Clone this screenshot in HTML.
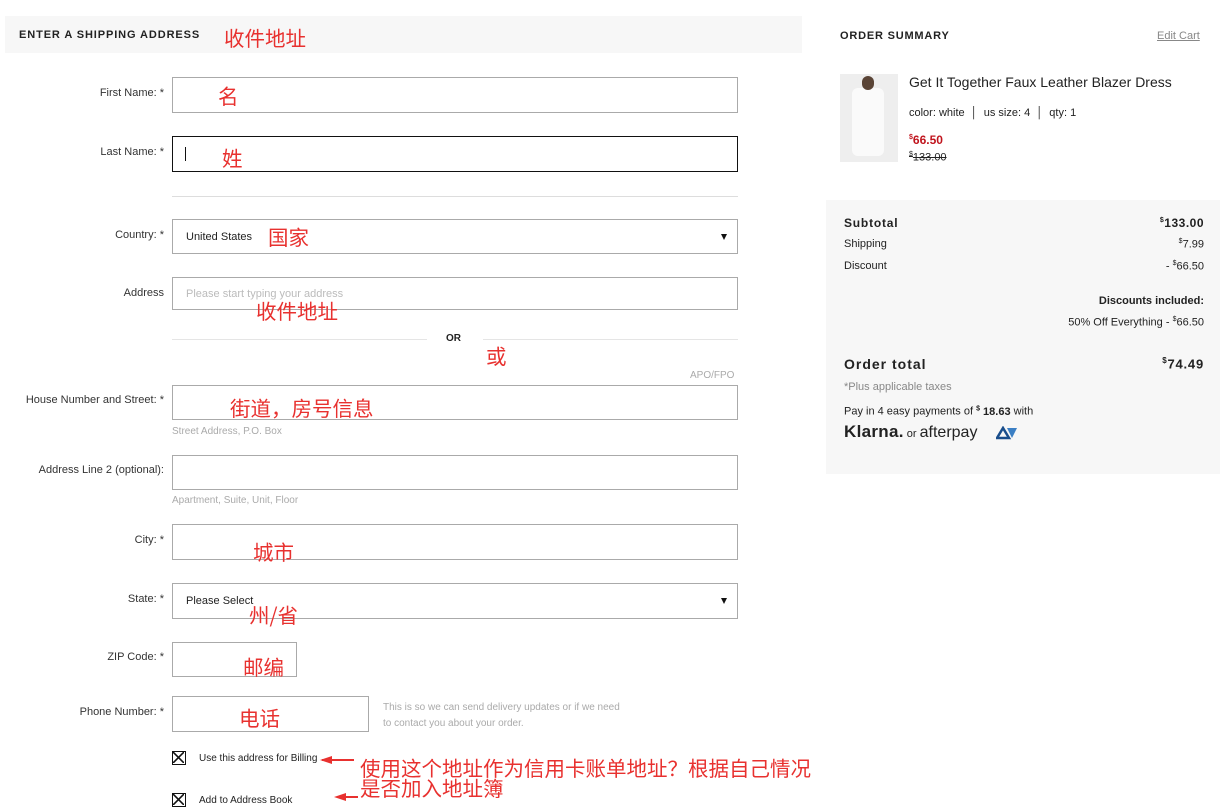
<!DOCTYPE html>
<html><head><meta charset="utf-8">
<style>
*{margin:0;padding:0;box-sizing:border-box}
body{width:1220px;height:806px;background:#fff;position:relative;overflow:hidden;font-family:"Liberation Sans","Noto Sans CJK SC",sans-serif;color:#222}
.a{position:absolute}
.lbl{position:absolute;right:1056px;font-size:11px;color:#333;white-space:nowrap}
.in{position:absolute;left:172px;width:566px;height:36px;border:1px solid #aaa;background:#fff}
.cn{position:absolute;color:#e8312f;font-size:20.5px;font-family:"Noto Sans CJK SC",sans-serif;white-space:nowrap;line-height:1}
.hint{position:absolute;left:172px;font-size:10px;color:#aaa}
.sel{font-size:11px;color:#222;padding:11px 13px;}
.sel:after{content:"";position:absolute;right:10px;top:14px;border-left:3.5px solid transparent;border-right:3.5px solid transparent;border-top:6px solid #111}
.chk{position:absolute;left:172px;width:14px;height:14px;border:1.5px solid #111}
.chk svg{position:absolute;left:0;top:0}
.r{position:absolute;right:16px;font-size:12px}
</style></head><body>
<div class="a" style="left:5px;top:16px;width:797px;height:37px;background:#f7f7f7"></div>
<div class="a" style="left:19px;top:29px;font-size:11px;font-weight:bold;letter-spacing:.9px">ENTER A SHIPPING ADDRESS</div>
<div class="cn" style="left:224px;top:27px">收件地址</div>

<div class="lbl" style="top:87px">First Name: *</div>
<div class="in" style="top:77px"></div>
<div class="cn" style="left:218px;top:85px">名</div>

<div class="lbl" style="top:146px">Last Name: *</div>
<div class="in" style="top:136px;border-color:#111"></div>
<div class="a" style="left:185px;top:147px;width:1px;height:14px;background:#111"></div>
<div class="cn" style="left:222px;top:147px">姓</div>

<div class="a" style="left:172px;top:196px;width:566px;height:1px;background:#ddd"></div>

<div class="lbl" style="top:229px">Country: *</div>
<div class="in sel" style="top:219px;height:35px">United States</div>
<div class="cn" style="left:268px;top:226px">国家</div>

<div class="lbl" style="top:287px">Address</div>
<div class="in" style="top:277px;height:33px;font-size:11px;color:#bbb;padding:10px 13px">Please start typing your address</div>
<div class="cn" style="left:256px;top:300px">收件地址</div>

<div class="a" style="left:172px;top:339px;width:255px;height:1px;background:#e5e5e5"></div>
<div class="a" style="left:483px;top:339px;width:255px;height:1px;background:#e5e5e5"></div>
<div class="a" style="left:446px;top:333px;font-size:10px;font-weight:bold">OR</div>
<div class="cn" style="left:486px;top:345px">或</div>
<div class="a" style="left:690px;top:370px;font-size:10px;color:#aaa">APO/FPO</div>

<div class="lbl" style="top:394px">House Number and Street: *</div>
<div class="in" style="top:385px;height:35px"></div>
<div class="cn" style="left:230px;top:397px">街道，房号信息</div>
<div class="hint" style="top:426px">Street Address, P.O. Box</div>

<div class="lbl" style="top:464px;right:1056px">Address Line 2 (optional):</div>
<div class="in" style="top:455px;height:35px"></div>
<div class="hint" style="top:495px">Apartment, Suite, Unit, Floor</div>

<div class="lbl" style="top:534px">City: *</div>
<div class="in" style="top:524px"></div>
<div class="cn" style="left:253px;top:541px">城市</div>

<div class="lbl" style="top:593px">State: *</div>
<div class="in sel" style="top:583px">Please Select</div>
<div class="cn" style="left:249px;top:604px">州/省</div>

<div class="lbl" style="top:651px">ZIP Code: *</div>
<div class="in" style="top:642px;width:125px;height:35px"></div>
<div class="cn" style="left:243px;top:656px">邮编</div>

<div class="lbl" style="top:706px">Phone Number: *</div>
<div class="in" style="top:696px;width:197px"></div>
<div class="cn" style="left:239px;top:707px">电话</div>
<div class="a" style="left:383px;top:700px;font-size:10px;color:#aaa;line-height:16px">This is so we can send delivery updates or if we need<br>to contact you about your order.</div>

<div class="chk" style="top:751px"><svg width="11" height="11"><path d="M0 0L11 11M11 0L0 11" stroke="#111" stroke-width="1.6"/></svg></div>
<div class="a" style="left:199px;top:753px;font-size:10px">Use this address for Billing</div>
<div class="chk" style="top:793px"><svg width="11" height="11"><path d="M0 0L11 11M11 0L0 11" stroke="#111" stroke-width="1.6"/></svg></div>
<div class="a" style="left:199px;top:795px;font-size:10px">Add to Address Book</div>
<svg class="a" style="left:318px;top:752px" width="40" height="56"><path d="M4 8L36 8" stroke="#e8312f" stroke-width="2"/><path d="M2 8L14 4L14 12Z" fill="#e8312f"/><path d="M20 45L46 45" stroke="#e8312f" stroke-width="2"/><path d="M16 45L28 41L28 49Z" fill="#e8312f"/></svg>
<div class="cn" style="left:360px;top:757px">使用这个地址作为信用卡账单地址？根据自己情况</div>
<div class="cn" style="left:360px;top:777px">是否加入地址簿</div>

<!-- right -->
<div class="a" style="left:840px;top:30px;font-size:11px;font-weight:bold;letter-spacing:.8px">ORDER SUMMARY</div>
<div class="a" style="left:1157px;top:30px;font-size:11px;color:#888;text-decoration:underline">Edit Cart</div>
<div class="a" style="left:840px;top:74px;width:58px;height:88px;background:#eeeeee"><div class="a" style="left:12px;top:14px;width:32px;height:68px;background:#fafafa;border-radius:6px"></div><div class="a" style="left:22px;top:2px;width:12px;height:14px;background:#5a4436;border-radius:6px"></div></div>
<div class="a" style="left:909px;top:74px;font-size:14px;color:#222">Get It Together Faux Leather Blazer Dress</div>
<div class="a" style="left:909px;top:107px;font-size:11px">color: white &nbsp;│&nbsp; us size: 4 &nbsp;│&nbsp; qty: 1</div>
<div class="a" style="left:909px;top:133px;font-size:12px;font-weight:bold;color:#c0141d"><sup style="font-size:7px">$</sup>66.50</div>
<div class="a" style="left:909px;top:151px;font-size:11px;text-decoration:line-through"><sup style="font-size:7px">$</sup>133.00</div>

<div class="a" style="left:826px;top:200px;width:394px;height:274px;background:#f7f7f7">
<div class="a" style="left:18px;top:16px;font-size:12px;font-weight:bold;letter-spacing:.8px">Subtotal</div>
<div class="r" style="top:16px;font-weight:bold;letter-spacing:.5px"><sup style="font-size:7px">$</sup>133.00</div>
<div class="a" style="left:18px;top:38px;font-size:11px">Shipping</div>
<div class="r" style="top:38px;font-size:11px"><sup style="font-size:7px">$</sup>7.99</div>
<div class="a" style="left:18px;top:60px;font-size:11px">Discount</div>
<div class="r" style="top:60px;font-size:11px">- <sup style="font-size:7px">$</sup>66.50</div>
<div class="r" style="top:95px;font-size:11px;font-weight:bold">Discounts included:</div>
<div class="r" style="top:116px;font-size:11px">50% Off Everything - <sup style="font-size:7px">$</sup>66.50</div>
<div class="a" style="left:18px;top:156px;font-size:14px;font-weight:bold;letter-spacing:1px">Order total</div>
<div class="r" style="top:156px;font-size:13px;font-weight:bold;letter-spacing:.8px"><sup style="font-size:8px">$</sup>74.49</div>
<div class="a" style="left:18px;top:181px;font-size:11px;color:#888">*Plus applicable taxes</div>
<div class="a" style="left:18px;top:205px;font-size:11px">Pay in 4 easy payments of <b><sup style="font-size:7px">$</sup> 18.63</b> with</div>
<div class="a" style="left:18px;top:222px;font-size:17px;font-weight:bold;white-space:nowrap;letter-spacing:.3px">Klarna.<span style="font-size:11px;font-weight:normal;letter-spacing:0"> or </span><span style="font-weight:normal;font-size:16px;letter-spacing:0">afterpay</span></div>
<svg class="a" style="left:170px;top:226px" width="22" height="14"><path d="M1 12L7 2L13 12Z" fill="none" stroke="#1a4e8c" stroke-width="2.5"/><path d="M11 2L21 2L16 12Z" fill="#3b7fc4"/></svg>
</div>
</body></html>
